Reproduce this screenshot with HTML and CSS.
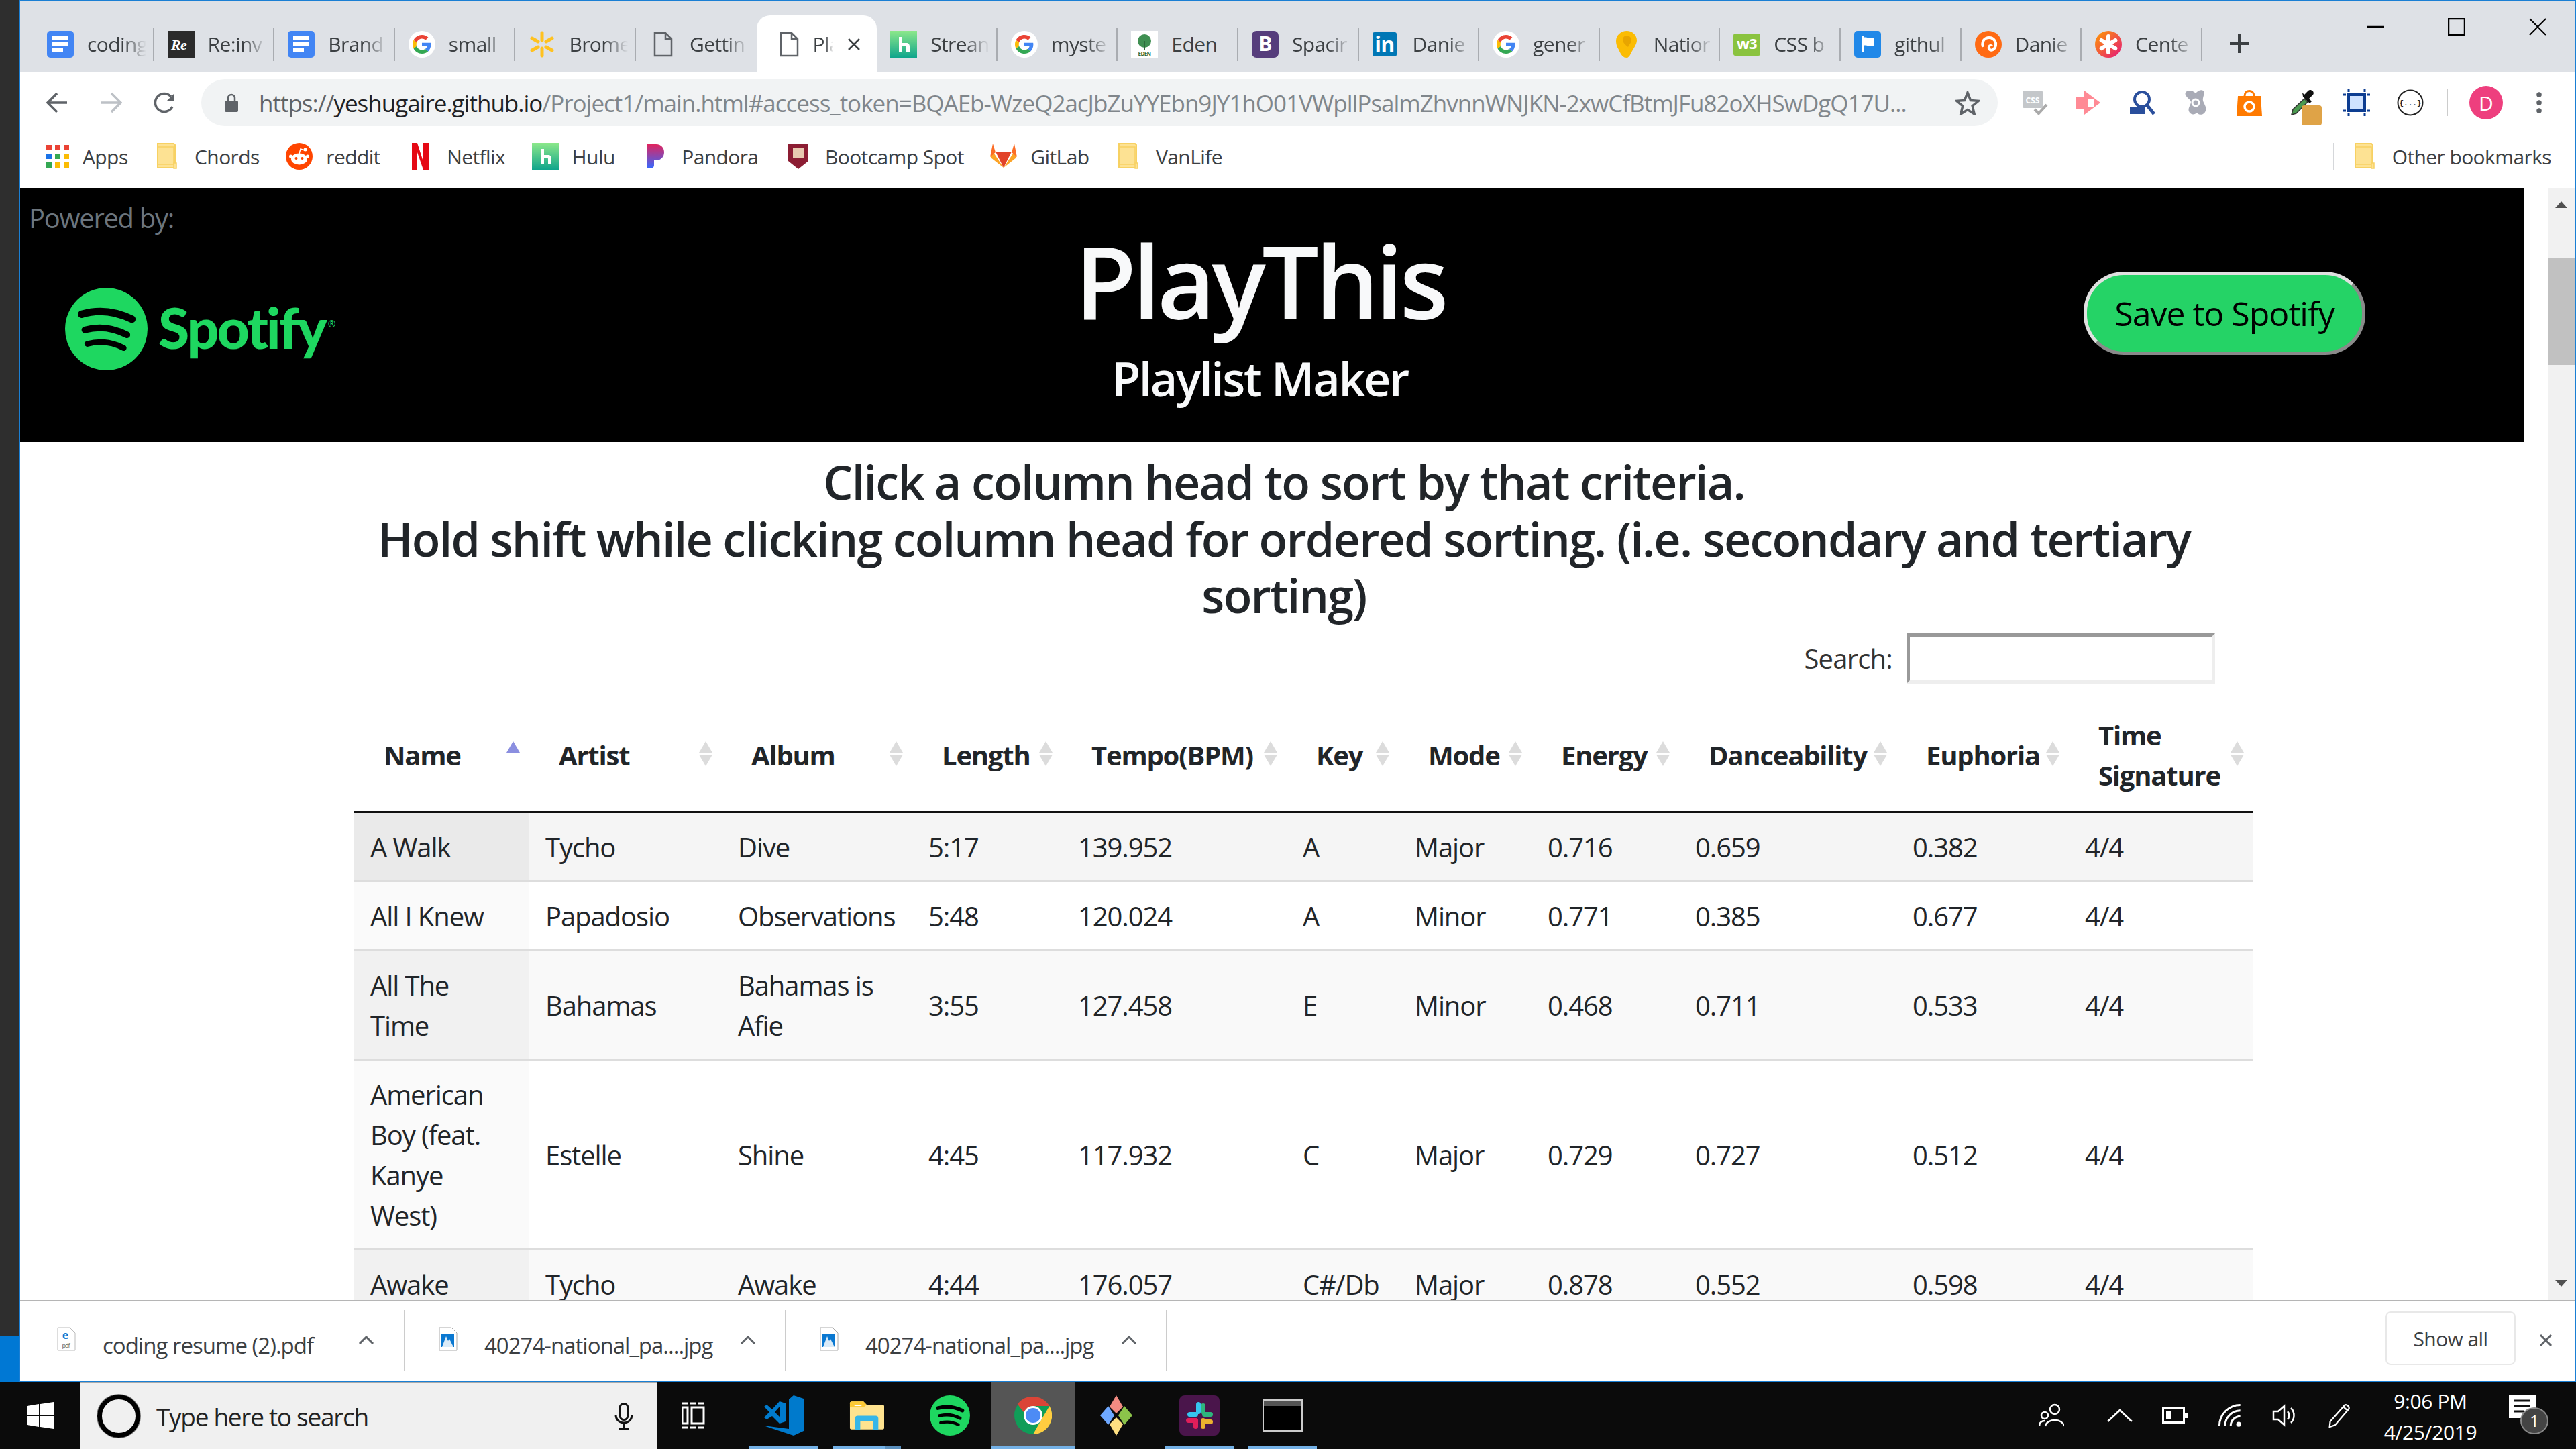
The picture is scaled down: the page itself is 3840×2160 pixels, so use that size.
FILE: index.html
```html
<!DOCTYPE html>
<html lang="en">
<head>
    <meta charset="UTF-8">
    <title>PlayThis</title>
    <link rel="stylesheet" href="styles.css">
</head>
<body>
    <svg class="defs" width="0" height="0">
        <symbol id="i-doc" viewBox="0 0 40 40"><rect width="40" height="40" rx="5" y="0" fill="#4285f4"/><path d="M8 8h24v6H8zM8 17h24v6H8zM8 26h16v6H8z" fill="#fff"/></symbol>
        <symbol id="i-page" viewBox="0 0 40 40"><path d="M8 3h16l9 9v25H8z M24 3v9h9" fill="none" stroke="#5f6368" stroke-width="2.5"/></symbol>
        <symbol id="i-g" viewBox="0 0 40 40"><circle cx="20" cy="20" r="20" fill="#fff"/><g transform="translate(6 6) scale(.583)"><path fill="#EA4335" d="M24 9.5c3.54 0 6.71 1.22 9.21 3.6l6.85-6.85C35.9 2.38 30.47 0 24 0 14.62 0 6.51 5.38 2.56 13.22l7.98 6.19C12.43 13.72 17.74 9.5 24 9.5z"/><path fill="#4285F4" d="M46.98 24.55c0-1.57-.15-3.09-.38-4.55H24v9.02h12.94c-.58 2.96-2.26 5.48-4.78 7.18l7.73 6c4.51-4.18 7.09-10.36 7.09-17.65z"/><path fill="#FBBC05" d="M10.53 28.59c-.48-1.45-.76-2.99-.76-4.59s.27-3.14.76-4.59l-7.98-6.19C.92 16.46 0 20.12 0 24c0 3.88.92 7.54 2.56 10.78l7.97-6.19z"/><path fill="#34A853" d="M24 48c6.48 0 11.93-2.13 15.89-5.81l-7.73-6c-2.15 1.45-4.92 2.3-8.16 2.3-6.26 0-11.57-4.22-13.47-9.91l-7.98 6.19C6.51 42.62 14.62 48 24 48z"/></g></symbol>
        <symbol id="i-folder" viewBox="0 0 40 40"><path d="M5 1h24l2 2v34H5z" fill="#fde293" stroke="#f7d163" stroke-width="2"/><path d="M5 6h24v26H5z" fill="none" stroke="#f7d163" stroke-width="1.5"/><path d="M29 30h4v8h-4z" fill="#fde293" stroke="#f7d163" stroke-width="1.5"/></symbol>
        <symbol id="i-hulu" viewBox="0 0 40 40"><defs><linearGradient id="hulu-bg" x1="0" y1="0" x2="0" y2="1"><stop offset="0" stop-color="#8ce88a"/><stop offset="1" stop-color="#0fa58c"/></linearGradient></defs><rect width="40" height="40" fill="url(#hulu-bg)"/><path d="M13 9h5v9h6c3 0 5 2 5 5v9h-5v-8c0-1-.5-2-2-2h-4v10h-5z" fill="#fff"/></symbol>
        <symbol id="i-spotify" viewBox="0 0 100 100"><circle cx="50" cy="50" r="50" fill="#1ed760"/><g fill="none" stroke="#000" stroke-linecap="round"><path d="M20 32Q50 23 81 38" stroke-width="9"/><path d="M24 51Q50 44 75 57" stroke-width="8"/><path d="M27 68Q50 62 71 73" stroke-width="7"/></g></symbol>
        <symbol id="i-photo" viewBox="0 0 28 36"><path d="M1 1h18l8 8v26H1z" fill="#fff" stroke="#aaa"/><rect x="3" y="10" width="20" height="20" fill="#0a78d1"/><path d="M5 30l6-16 3 7 2-3 6 12z" fill="#fff" opacity=".85"/></symbol>
    </svg>

    <div class="desk">
        <div class="wallpaper"><div class="wallpaper-blue"></div></div>

        <div class="chrome">
            <div class="tabstrip">
                <div class="tab"><svg class="fav"><use href="#i-doc"/></svg><span class="tab-name">coding</span></div>
                <div class="tab"><svg class="fav" viewBox="0 0 40 40"><rect width="40" height="40" fill="#2b2b2b"/><text x="5" y="28" class="fav-re">Re</text></svg><span class="tab-name">Re:inv</span></div>
                <div class="tab"><svg class="fav"><use href="#i-doc"/></svg><span class="tab-name">Brand</span></div>
                <div class="tab"><svg class="fav"><use href="#i-g"/></svg><span class="tab-name">small</span></div>
                <div class="tab"><svg class="fav" viewBox="0 0 40 40"><g stroke="#ffc220" stroke-width="5" stroke-linecap="round"><path d="M20 3v11M20 26v11M5 11l9 5M26 24l9 5M5 29l9-5M26 16l9-5"/></g></svg><span class="tab-name">Brome</span></div>
                <div class="tab tab-before-active"><svg class="fav"><use href="#i-page"/></svg><span class="tab-name">Gettin</span></div>
                <div class="tab tab-active"><svg class="fav"><use href="#i-page"/></svg><span class="tab-name">Pla</span>
                    <svg class="tab-close" viewBox="0 0 20 20"><path d="M2 2l16 16M18 2L2 18" stroke="#3c4043" stroke-width="2.5"/></svg></div>
                <div class="tab"><svg class="fav"><use href="#i-hulu"/></svg><span class="tab-name">Strean</span></div>
                <div class="tab"><svg class="fav"><use href="#i-g"/></svg><span class="tab-name">myste</span></div>
                <div class="tab"><svg class="fav" viewBox="0 0 40 40"><rect width="40" height="40" fill="#fff"/><circle cx="20" cy="15" r="10" fill="#3f8f52"/><path d="M20 15v13" stroke="#2e6b3d" stroke-width="2"/><text x="20" y="37" class="fav-eden">EDEN</text></svg><span class="tab-name tab-name-full">Eden</span></div>
                <div class="tab"><svg class="fav" viewBox="0 0 40 40"><rect width="40" height="40" rx="7" fill="#563d7c"/><text x="20" y="30" class="fav-b">B</text></svg><span class="tab-name">Spacir</span></div>
                <div class="tab"><svg class="fav" viewBox="0 0 40 40"><rect y="2" width="36" height="36" rx="3" fill="#0077b5"/><text x="18" y="32" class="fav-in">in</text></svg><span class="tab-name">Danie</span></div>
                <div class="tab"><svg class="fav"><use href="#i-g"/></svg><span class="tab-name">gener</span></div>
                <div class="tab"><svg class="fav" viewBox="0 0 40 40"><path d="M20 0c8 0 15 6 15 14 0 7-6 13-9 20-2 4-4 6-6 6-5 0-8-3-12-12C5 23 4 19 4 15 4 6 12 0 20 0z" fill="#fbbc04"/><path d="M20 7c4 0 7 3 7 7 0 3-3 6-5 10-3-2-8-7-8-10 0-4 2-7 6-7z" fill="#e8a500"/></svg><span class="tab-name">Natior</span></div>
                <div class="tab"><svg class="fav" viewBox="0 0 40 40"><rect y="4" width="40" height="33" rx="3" fill="#8ac33f"/><text x="20" y="27" class="fav-w3">w3</text></svg><span class="tab-name">CSS b</span></div>
                <div class="tab"><svg class="fav" viewBox="0 0 40 40"><rect width="40" height="40" rx="5" fill="#2188e8"/><path d="M11 8h3v24h-3zM14 10c5-2 9 3 15 0v12c-6 3-10-2-15 0z" fill="#fff"/></svg><span class="tab-name">githul</span></div>
                <div class="tab"><svg class="fav" viewBox="0 0 40 40"><circle cx="20" cy="20" r="20" fill="#ff6a13"/><path d="M12 24a10 10 0 1 1 15 4c-4 2-7-1-6-4 1-3 4-2 4-1" fill="none" stroke="#fff" stroke-width="4"/></svg><span class="tab-name">Danie</span></div>
                <div class="tab"><svg class="fav" viewBox="0 0 40 40"><defs><linearGradient id="center-bg" x1="0" y1="0" x2="1" y2="1"><stop offset="0" stop-color="#ff9c00"/><stop offset="1" stop-color="#e4167c"/></linearGradient></defs><circle cx="20" cy="20" r="20" fill="url(#center-bg)"/><g stroke="#fff" stroke-width="6" stroke-linecap="round"><path d="M20 8v24M9.600 14l20.800 12M9.600 26l20.800-12"/></g></svg><span class="tab-name">Cente</span></div>
                <svg class="new-tab" viewBox="0 0 32 32"><path d="M16 2v28M2 16h28" stroke="#3c4043" stroke-width="4"/></svg>
                <div class="win-controls">
                    <svg class="win-btn" viewBox="0 0 26 26"><path d="M0 13h26" stroke="#000" stroke-width="2.500"/></svg>
                    <svg class="win-btn" viewBox="0 0 26 26"><rect x="1" y="1" width="24" height="24" fill="none" stroke="#000" stroke-width="2.500"/></svg>
                    <svg class="win-btn" viewBox="0 0 26 26"><path d="M1 1l24 24M25 1L1 25" stroke="#000" stroke-width="2"/></svg>
                </div>
            </div>

            <div class="toolbar">
                <svg class="nav nav-back" viewBox="0 0 32 32"><path d="M31 16H3M16 2L2 16l14 14" fill="none" stroke="#5f6368" stroke-width="3.500"/></svg>
                <svg class="nav nav-fwd" viewBox="0 0 32 32"><path d="M1 16h28M16 2l14 14-14 14" fill="none" stroke="#bdc1c6" stroke-width="3.500"/></svg>
                <svg class="nav nav-reload" viewBox="0 0 32 32"><path d="M27 22A13.500 13.500 0 1 1 25 7" fill="none" stroke="#5f6368" stroke-width="3.500"/><path d="M30 2v12H18z" fill="#5f6368"/></svg>
                <div class="omnibox">
                    <svg class="lock" viewBox="0 0 20 28"><path d="M5 12V7a5 5 0 0 1 10 0v5" fill="none" stroke="#5f6368" stroke-width="2.500"/><rect y="11" width="20" height="17" rx="2" fill="#5f6368"/></svg>
                    <div class="url"><span class="url-scheme">https://</span><span class="url-host">yeshugaire.github.io</span>/Project1/main.html#access_token=BQAEb-WzeQ2acJbZuYYEbn9JY1hO01VWpllPsalmZhvnnWNJKN-2xwCfBtmJFu82oXHSwDgQ17U...</div>
                    <svg class="star" viewBox="0 0 36 36"><path d="M18 3l4.500 11.500 12 .8-9.300 7.700 3 12L18 28.500 7.800 35l3-12L1.500 15.300l12-.8z" fill="none" stroke="#5f6368" stroke-width="3.500"/></svg>
                </div>
                <div class="extensions">
                    <svg class="ext" viewBox="0 0 40 40"><rect x="2" y="2" width="30" height="26" rx="2" fill="#c4c7ca"/><text x="17" y="21" class="ext-css">CSS</text><path d="M20 30l6 6 12-13" fill="none" stroke="#aaa" stroke-width="4"/></svg>
                    <svg class="ext" viewBox="0 0 40 40"><path d="M2 11h12V2l24 18-24 18v-9H2z" fill="#ff8a95"/><rect x="20" y="14" width="8" height="12" fill="#fff"/></svg>
                    <svg class="ext" viewBox="0 0 40 40"><circle cx="20" cy="15" r="11" fill="none" stroke="#2a4f9c" stroke-width="4"/><path d="M27 23l11 14" stroke="#2a4f9c" stroke-width="5"/><rect x="2" y="27" width="22" height="10" fill="#2a4f9c"/></svg>
                    <svg class="ext" viewBox="0 0 40 40"><path d="M20 6c4-5 10-6 12-3 2 4-2 9-1 14s6 9 4 15-9 8-13 3c-4 4-10 3-12-2s3-10 3-14S2 10 5 5s11-3 15 1z" fill="#a9abb6"/><circle cx="20" cy="20" r="5" fill="none" stroke="#fff" stroke-width="3"/></svg>
                    <svg class="ext" viewBox="0 0 40 40"><path d="M13 10c0-10 14-10 14 0" fill="none" stroke="#ff7a00" stroke-width="3"/><path d="M3 10h34l2 30H1z" fill="#ff7a00"/><circle cx="20" cy="26" r="7" fill="none" stroke="#fff" stroke-width="3.500"/></svg>
                    <div class="ext-dropper">
                        <svg class="ext" viewBox="0 0 40 40"><path d="M3 38l2-8L22 14l5 5-17 17z" fill="#4a9a4f" stroke="#333" stroke-width="1.500"/><path d="M20 11l10 10 3-3-4-4 6-6c3-4-3-9-7-6l-6 6-3-3z" fill="#111"/></svg>
                        <span class="ext-swatch"></span>
                    </div>
                    <svg class="ext" viewBox="0 0 40 40"><rect x="8" y="8" width="24" height="24" fill="#cfe2ff" stroke="#0d3d91" stroke-width="4"/><path d="M8 0v4M32 0v4M8 36v4M32 36v4M0 8h4M36 8h4M0 32h4M36 32h4" stroke="#0d3d91" stroke-width="3"/></svg>
                    <svg class="ext" viewBox="0 0 40 40"><circle cx="20" cy="20" r="18.500" fill="none" stroke="#222" stroke-width="2"/><text x="20" y="24" class="ext-json">{...}</text></svg>
                </div>
                <span class="toolbar-sep"></span>
                <div class="avatar">D</div>
                <svg class="menu-dots" viewBox="0 0 8 32"><circle cx="4" cy="4" r="3.800" fill="#5f6368"/><circle cx="4" cy="16" r="3.800" fill="#5f6368"/><circle cx="4" cy="28" r="3.800" fill="#5f6368"/></svg>
            </div>

            <div class="bookmarks">
                <div class="bm"><svg class="bm-icon apps" viewBox="0 0 34 34"><g fill="#ea4335"><rect width="8" height="8"/><rect x="13" width="8" height="8"/><rect x="26" width="8" height="8"/></g><rect y="13" width="8" height="8" fill="#1a73e8"/><rect x="13" y="13" width="8" height="8" fill="#34a853"/><rect x="26" y="13" width="8" height="8" fill="#fbbc04"/><rect y="26" width="8" height="8" fill="#34a853"/><rect x="13" y="26" width="8" height="8" fill="#fbbc04"/><rect x="26" y="26" width="8" height="8" fill="#fbbc04"/></svg>Apps</div>
                <div class="bm"><svg class="bm-icon"><use href="#i-folder"/></svg>Chords</div>
                <div class="bm"><svg class="bm-icon" viewBox="0 0 40 40"><circle cx="20" cy="20" r="20" fill="#ff4500"/><ellipse cx="20" cy="24" rx="12" ry="8.500" fill="#fff"/><circle cx="15.500" cy="23" r="2" fill="#ff4500"/><circle cx="24.500" cy="23" r="2" fill="#ff4500"/><circle cx="7.500" cy="20" r="2.500" fill="#fff"/><circle cx="32.500" cy="20" r="2.500" fill="#fff"/><path d="M20 16l2-7 6 2" fill="none" stroke="#fff" stroke-width="1.500"/><circle cx="29" cy="10" r="2.500" fill="#fff"/></svg>reddit</div>
                <div class="bm"><svg class="bm-icon" viewBox="0 0 40 40"><path d="M8 0h8l9 28V0h8v40h-8L16 14v26H8z" fill="#e50914"/></svg>Netflix</div>
                <div class="bm"><svg class="bm-icon"><use href="#i-hulu"/></svg>Hulu</div>
                <div class="bm"><svg class="bm-icon" viewBox="0 0 40 40"><defs><linearGradient id="pandora-bg" x1="0" y1="0" x2="0" y2="1"><stop offset="0" stop-color="#e0245e"/><stop offset="1" stop-color="#3668ff"/></linearGradient></defs><path d="M8 2h14c16 0 16 24 0 24h-3v7c0 3-2 5-5 5H8z" fill="url(#pandora-bg)"/></svg>Pandora</div>
                <div class="bm"><svg class="bm-icon" viewBox="0 0 40 40"><path d="M5 1h30v26L20 39 5 27z" fill="#8c1d33"/><path d="M12 8h16v14H12z" fill="#e8c9b0"/></svg>Bootcamp Spot</div>
                <div class="bm"><svg class="bm-icon" viewBox="0 0 40 40"><path d="M20 37L1 22l3-9z" fill="#fca326"/><path d="M20 37l19-15-3-9z" fill="#fca326"/><path d="M20 37L8 13h24z" fill="#e24329"/><path d="M8 14L4 1l-4 20z" fill="#fc6d26"/><path d="M32 14L36 1l4 20z" fill="#fc6d26"/></svg>GitLab</div>
                <div class="bm"><svg class="bm-icon"><use href="#i-folder"/></svg>VanLife</div>
                <div class="bm-other"><svg class="bm-icon"><use href="#i-folder"/></svg>Other bookmarks</div>
            </div>

            <div class="page-frame">
                <div class="page">
                    <header class="banner">
                        <div class="banner-left">
                            <p class="powered">Powered by:</p>
                            <div class="spotify-logo">
                                <svg class="spotify-mark"><use href="#i-spotify"/></svg>
                                <span class="spotify-word">Spotify</span><span class="spotify-reg">®</span>
                            </div>
                        </div>
                        <div class="banner-title">
                            <h1>PlayThis</h1>
                            <h3>Playlist Maker</h3>
                        </div>
                        <div class="banner-right">
                            <button class="save-btn" type="button">Save to Spotify</button>
                        </div>
                    </header>

                    <h3 class="hint">Click a column head to sort by that criteria.<br>Hold shift while clicking column head for ordered sorting. (i.e. secondary and tertiary<br>sorting)</h3>

                    <div class="search-row">
                        <label for="tableSearch">Search:</label>
                        <input id="tableSearch" type="text">
                    </div>

                    <table class="songs">
                        <thead>
                            <tr>
                                <th class="sort-asc">Name</th>
                                <th>Artist</th>
                                <th>Album</th>
                                <th>Length</th>
                                <th>Tempo(BPM)</th>
                                <th>Key</th>
                                <th>Mode</th>
                                <th>Energy</th>
                                <th>Danceability</th>
                                <th>Euphoria</th>
                                <th>Time Signature</th>
                            </tr>
                        </thead>
                        <tbody>
                            <tr class="row-hover">
                                <td>A Walk</td><td>Tycho</td><td>Dive</td><td>5:17</td><td>139.952</td><td>A</td><td>Major</td><td>0.716</td><td>0.659</td><td>0.382</td><td>4/4</td>
                            </tr>
                            <tr>
                                <td>All I Knew</td><td>Papadosio</td><td>Observations</td><td>5:48</td><td>120.024</td><td>A</td><td>Minor</td><td>0.771</td><td>0.385</td><td>0.677</td><td>4/4</td>
                            </tr>
                            <tr>
                                <td>All The Time</td><td>Bahamas</td><td>Bahamas is Afie</td><td>3:55</td><td>127.458</td><td>E</td><td>Minor</td><td>0.468</td><td>0.711</td><td>0.533</td><td>4/4</td>
                            </tr>
                            <tr>
                                <td>American Boy (feat. Kanye West)</td><td>Estelle</td><td>Shine</td><td>4:45</td><td>117.932</td><td>C</td><td>Major</td><td>0.729</td><td>0.727</td><td>0.512</td><td>4/4</td>
                            </tr>
                            <tr>
                                <td>Awake</td><td>Tycho</td><td>Awake</td><td>4:44</td><td>176.057</td><td>C#/Db</td><td>Major</td><td>0.878</td><td>0.552</td><td>0.598</td><td>4/4</td>
                            </tr>
                        </tbody>
                    </table>
                </div>
                <div class="scrollbar">
                    <svg class="scroll-arrow" viewBox="0 0 20 12"><path d="M10 1l9 10H1z" fill="#505050"/></svg>
                    <div class="scroll-track"><div class="scroll-thumb"></div></div>
                    <svg class="scroll-arrow" viewBox="0 0 20 12"><path d="M10 11L1 1h18z" fill="#505050"/></svg>
                </div>
            </div>

            <div class="downloads">
                <div class="dl-item">
                    <svg class="dl-icon" viewBox="0 0 28 36"><path d="M1 1h18l8 8v26H1z" fill="#fff" stroke="#bbb"/><text x="12" y="18" class="dl-e">e</text><text x="13" y="31" class="dl-pdf">pdf</text></svg>
                    <span class="dl-name">coding resume (2).pdf</span>
                    <svg class="dl-chev" viewBox="0 0 24 14"><path d="M2 12L12 2l10 10" fill="none" stroke="#5f6368" stroke-width="3"/></svg>
                </div>
                <div class="dl-item">
                    <svg class="dl-icon"><use href="#i-photo"/></svg>
                    <span class="dl-name">40274-national_pa....jpg</span>
                    <svg class="dl-chev" viewBox="0 0 24 14"><path d="M2 12L12 2l10 10" fill="none" stroke="#5f6368" stroke-width="3"/></svg>
                </div>
                <div class="dl-item">
                    <svg class="dl-icon"><use href="#i-photo"/></svg>
                    <span class="dl-name">40274-national_pa....jpg</span>
                    <svg class="dl-chev" viewBox="0 0 24 14"><path d="M2 12L12 2l10 10" fill="none" stroke="#5f6368" stroke-width="3"/></svg>
                </div>
                <button class="show-all" type="button">Show all</button>
                <svg class="dl-close" viewBox="0 0 20 20"><path d="M2 2l16 16M18 2L2 18" stroke="#5f6368" stroke-width="3"/></svg>
            </div>
        </div>
    </div>

    <div class="taskbar">
        <svg class="win-logo" viewBox="0 0 40 40"><path d="M0 6l18-3v16H0zM20 3l20-3v19H20zM0 21h18v16L0 34zM20 21h20v19l-20-3z" fill="#fff"/></svg>
        <div class="task-search">
            <span class="cortana"></span>
            <span class="task-search-text">Type here to search</span>
            <svg class="mic" viewBox="0 0 28 40"><rect x="8" y="1.500" width="12" height="24" rx="6" fill="none" stroke="#111" stroke-width="3"/><path d="M2 18c0 16 24 16 24 0M14 32v7M7 39h14" fill="none" stroke="#111" stroke-width="3"/></svg>
        </div>
        <svg class="task-view" viewBox="0 0 42 40"><path d="M1 2h8M1 38h8M13 2h8M13 38h8M25 2h8M25 38h8M15 8h18v24H15zM1 8h8v24H1z" fill="none" stroke="#fff" stroke-width="3"/></svg>

        <div class="task-app running"><svg class="app-icon" viewBox="0 0 60 60"><path d="M45 0L60 5V53L45 60L0 45L38 50V6z" fill="#007acc"/><path fill-rule="evenodd" d="M24 9L33 12V39L24 42L13 31L5 36L1 33L9 25L1 17L5 14L13 21zM24 17L17 25L24 32z" fill="#007acc"/></svg></div>
        <div class="task-app running running-multi"><svg class="app-icon folder" viewBox="0 0 54 44"><path d="M1 3c0-2 1-3 3-3h18l5 5h25c1 0 2 1 2 2v34c0 1-1 2-2 2H3c-1 0-2-1-2-2z" fill="#ffe38f"/><path d="M1 3c0-2 1-3 3-3h18l5 5-5 4H1z" fill="#fcc935"/><path d="M8 5h11v2H8z" fill="#fff"/><path d="M9 44V26c0-3 2-4 4-4h28c2 0 4 1 4 4v18h-8V30H17v14z" fill="#36b6e8"/></svg></div>
        <div class="task-app"><svg class="app-icon"><use href="#i-spotify"/></svg></div>
        <div class="task-app active running"><svg class="app-icon chrome-icon" viewBox="0 0 48 48"><circle cx="24" cy="24" r="24" fill="#0f9d58"/><path d="M45 12A24 24 0 0 1 24 48l12-21z" fill="#ffcd40"/><path d="M24 0a24 24 0 0 1 21 12H24a12 12 0 0 0-11.500 8.500L4 9.500A24 24 0 0 1 24 0z" fill="#db4437"/><circle cx="24" cy="24" r="12" fill="#fff"/><circle cx="24" cy="24" r="9.500" fill="#4c8bf5"/></svg></div>
        <div class="task-app"><svg class="app-icon" viewBox="0 0 60 60"><path d="M30 0L40 17L30 27L20 17z" fill="#f28b82"/><path d="M54 30L42 44L33 30L42 16z" fill="#8bc34a"/><path d="M30 60L20 43L30 33L40 43z" fill="#ffe082"/><path d="M6 30L18 16L27 30L18 44z" fill="#6ea8ff"/></svg></div>
        <div class="task-app running"><svg class="app-icon" viewBox="0 0 60 60"><rect width="60" height="60" rx="8" fill="#4a154b"/><rect x="25" y="10" width="7" height="18" rx="3.500" fill="#36c5f0"/><rect x="12" y="25" width="16" height="7" rx="3.500" fill="#36c5f0"/><rect x="32" y="12" width="7" height="16" rx="3.500" fill="#2eb67d"/><rect x="34" y="25" width="16" height="7" rx="3.500" fill="#2eb67d"/><rect x="10" y="34" width="18" height="7" rx="3.500" fill="#e01e5a"/><rect x="21" y="34" width="7" height="16" rx="3.500" fill="#e01e5a"/><rect x="32" y="34" width="7" height="16" rx="3.500" fill="#ecb22e"/><rect x="32" y="36" width="18" height="7" rx="3.500" fill="#ecb22e"/></svg></div>
        <div class="task-app running"><svg class="app-icon term" viewBox="0 0 60 48"><rect x="1" y="1" width="58" height="46" fill="#000" stroke="#ccc" stroke-width="2"/><rect x="2" y="2" width="56" height="8" fill="#555"/></svg></div>

        <div class="tray">
            <svg class="tray-icon tray-people" viewBox="0 0 38 36"><circle cx="24" cy="9" r="7" fill="none" stroke="#fff" stroke-width="2.500"/><path d="M10 34c2-12 26-12 28 0" fill="none" stroke="#fff" stroke-width="2.500"/><circle cx="9" cy="18" r="5" fill="none" stroke="#fff" stroke-width="2.500"/><path d="M1 34c0-6 4-8 8-8" fill="none" stroke="#fff" stroke-width="2.500"/></svg>
            <svg class="tray-icon" viewBox="0 0 34 18"><path d="M1 17L17 2l16 15" fill="none" stroke="#fff" stroke-width="2.500"/></svg>
            <svg class="tray-icon" viewBox="0 0 38 24"><rect x="1.500" y="1.500" width="31" height="21" fill="none" stroke="#fff" stroke-width="3"/><rect x="6" y="6" width="8" height="12" fill="#fff"/><rect x="34" y="8" width="4" height="8" fill="#fff"/></svg>
            <svg class="tray-icon" viewBox="0 0 30 30"><path d="M2 28A26 26 0 0 1 28 2M9 28A19 19 0 0 1 28 9M16 28A12 12 0 0 1 28 16" fill="none" stroke="#fff" stroke-width="2.500"/><circle cx="26" cy="26" r="3" fill="#fff"/></svg>
            <svg class="tray-icon" viewBox="0 0 38 34"><path d="M2 11h7l9-8v28l-9-8H2z" fill="none" stroke="#fff" stroke-width="2.500"/><path d="M23 11c3 3 3 9 0 12M28 6c6 6 6 16 0 22" fill="none" stroke="#fff" stroke-width="2.500"/></svg>
            <svg class="tray-icon" viewBox="0 0 40 40"><path d="M28 3c3-2 8 2 7 6L12 36l-9 3 1-9z" fill="none" stroke="#fff" stroke-width="2.500"/><path d="M26 6l7 6" stroke="#fff" stroke-width="2.500"/></svg>
        </div>
        <div class="clock"><span>9:06 PM</span><span>4/25/2019</span></div>
        <div class="notify">
            <svg class="notify-icon" viewBox="0 0 40 34"><path d="M0 0h40v34H0z" fill="#fff"/><path d="M8 8h24M8 16h24M8 24h14" stroke="#111" stroke-width="3"/></svg>
            <span class="notify-badge">1</span>
        </div>
    </div>
</body>
</html>
```
FILE: styles.css
```css
/* Whole screen */
html, body {
    margin: 0;
    padding: 0;
}

body {
    width: 3840px;
    height: 2160px;
    overflow: hidden;
    display: flex;
    flex-direction: column;
    font-family: "Open Sans", "Noto Sans", sans-serif;
    color: #212529;
    background: #0b0b0b;
}

.defs {
    position: absolute;
}

.desk {
    display: flex;
    height: 2060px;
}

.wallpaper {
    width: 29px;
    background: #2e2e2e;
    display: flex;
    flex-direction: column;
    justify-content: flex-end;
}

.wallpaper-blue {
    height: 68px;
    background: #0078d4;
}

.chrome {
    width: 3811px;
    display: flex;
    flex-direction: column;
    box-sizing: border-box;
    background: #fff;
    border: solid #1a7fd4;
    border-width: 2px 2px 2px 1px;
}

/* Tabs */
.tabstrip {
    height: 106px;
    flex: none;
    display: flex;
    align-items: flex-end;
    padding-left: 20px;
    background: #dee1e6;
    box-sizing: border-box;
    position: relative;
}

.tab {
    width: 179.6px;
    height: 85px;
    flex: none;
    box-sizing: border-box;
    display: flex;
    align-items: center;
    padding-left: 20px;
    position: relative;
    font-size: 30px;
    letter-spacing: -0.6px;
    color: #3c4043;
}

.tab::after {
    content: "";
    position: absolute;
    right: 0;
    top: 18px;
    height: 50px;
    width: 2px;
    background: #a9acb1;
}

.tab-before-active::after,
.tab-active::after {
    display: none;
}

.tab-active {
    background: #fff;
    border-radius: 20px 20px 0 0;
    padding-left: 28px;
}

.fav {
    width: 40px;
    height: 40px;
    flex: none;
}

.fav-re {
    font: italic 700 22px "Liberation Serif", serif;
    fill: #fff;
}

.fav-eden {
    font: 700 8px "Open Sans", sans-serif;
    fill: #2e6b3d;
    text-anchor: middle;
}

.fav-b {
    font: 700 30px "Open Sans", sans-serif;
    fill: #fff;
    text-anchor: middle;
}

.fav-in {
    font: 700 32px "Open Sans", sans-serif;
    fill: #fff;
    text-anchor: middle;
}

.fav-w3 {
    font: 700 22px "Open Sans", sans-serif;
    fill: #fff;
    text-anchor: middle;
}

.tab-name {
    margin-left: 20px;
    width: 88px;
    overflow: hidden;
    white-space: nowrap;
    -webkit-mask-image: linear-gradient(to right, #000 60%, transparent 100%);
    mask-image: linear-gradient(to right, #000 60%, transparent 100%);
}

.tab-name-full {
    -webkit-mask-image: none;
    mask-image: none;
}

.tab-active .tab-name {
    margin-left: 16px;
    width: 30px;
}

.tab-close {
    width: 20px;
    height: 20px;
    margin-left: 21px;
}

.new-tab {
    width: 32px;
    height: 32px;
    margin: 0 0 27px 39px;
}

.win-controls {
    position: absolute;
    top: 25px;
    right: 42px;
    display: flex;
    gap: 95px;
}

.win-btn {
    width: 26px;
    height: 26px;
}

/* Toolbar with address box */
.toolbar {
    height: 90px;
    flex: none;
    display: flex;
    align-items: center;
    padding-left: 39px;
}

.nav {
    width: 32px;
    height: 32px;
    flex: none;
}

.nav-fwd {
    margin-left: 49px;
}

.nav-reload {
    margin-left: 48px;
}

.omnibox {
    width: 2678px;
    height: 70px;
    flex: none;
    margin-left: 38px;
    display: flex;
    align-items: center;
    background: #f1f3f4;
    border-radius: 35px;
    box-sizing: border-box;
    padding: 0 10px 0 35px;
    font-size: 35px;
    letter-spacing: -1px;
    color: #80868b;
}

.lock {
    width: 20px;
    height: 28px;
    flex: none;
}

.url {
    flex: 1;
    margin-left: 31px;
    white-space: nowrap;
    overflow: hidden;
}

.url-scheme {
    color: #5f6368;
}

.url-host {
    color: #202124;
}

.star {
    width: 36px;
    height: 36px;
    flex: none;
    margin: 0 17px 0 10px;
}

.extensions {
    display: flex;
    gap: 40px;
    margin-left: 35px;
}

.ext {
    width: 40px;
    height: 40px;
    display: block;
}

.ext-css {
    font: 700 12px "Open Sans", sans-serif;
    fill: #fff;
    text-anchor: middle;
}

.ext-json {
    font: 700 11px "Liberation Mono", monospace;
    fill: #222;
    text-anchor: middle;
}

.ext-dropper {
    position: relative;
    width: 40px;
}

.ext-swatch {
    position: absolute;
    left: 18px;
    top: 24px;
    width: 30px;
    height: 30px;
    border-radius: 4px;
    background: #dfa347;
}

.toolbar-sep {
    width: 2px;
    height: 40px;
    margin-left: 34px;
    background: #ccc;
}

.avatar {
    width: 50px;
    height: 50px;
    margin-left: 32px;
    border-radius: 50%;
    background: #ee3f7e;
    color: #fff;
    font-size: 30px;
    display: flex;
    align-items: center;
    justify-content: center;
}

.menu-dots {
    width: 8px;
    height: 32px;
    margin-left: 50px;
}

/* Bookmarks bar */
.bookmarks {
    height: 82px;
    flex: none;
    box-sizing: border-box;
    padding: 0 0 12px 39px;
    display: flex;
    align-items: center;
    gap: 39.5px;
    font-size: 30px;
    letter-spacing: -0.6px;
    color: #3c4043;
}

.bm,
.bm-other {
    display: flex;
    align-items: center;
    gap: 20px;
    white-space: nowrap;
}

.bm-icon {
    width: 40px;
    height: 40px;
    flex: none;
}

.bm-icon.apps {
    width: 34px;
    height: 34px;
}

.bm-other {
    margin-left: auto;
    height: 40px;
    padding: 0 35px 0 26px;
    border-left: 2px solid #d5d7da;
}

/* Page area */
.page-frame {
    height: 1658px;
    flex: none;
    display: flex;
    overflow: hidden;
}

.page {
    flex: 1;
    min-width: 0;
    overflow: hidden;
}

.banner {
    width: 3732px;
    height: 379px;
    background: #000;
    display: grid;
    grid-template-columns: 1448px 800px 1fr;
}

.powered {
    margin: 0;
    padding: 15px 0 0 13px;
    font-size: 40px;
    line-height: 60px;
    letter-spacing: -1.3px;
    color: #6c757d;
}

.spotify-logo {
    display: flex;
    align-items: center;
    margin: 74px 0 0 67px;
    color: #1ed760;
}

.spotify-mark {
    width: 123px;
    height: 123px;
    flex: none;
}

.spotify-word {
    margin: -6px 0 0 16px;
    font-family: Lato, sans-serif;
    font-size: 84px;
    font-weight: 900;
    letter-spacing: -3px;
    line-height: 100px;
}

.spotify-reg {
    align-self: flex-start;
    margin: 44px 0 0 4px;
    font-size: 14px;
}

.banner-title {
    text-align: center;
    color: #f8f9fa;
}

.banner-title h1 {
    margin: 48px 0 0;
    font-size: 150px;
    font-weight: 600;
    letter-spacing: -5.5px;
    line-height: 180px;
}

.banner-title h3 {
    margin: 14px 0 0;
    font-size: 70px;
    font-weight: 600;
    letter-spacing: -2.4px;
    line-height: 84px;
}

.banner-right {
    display: flex;
    justify-content: flex-end;
    padding: 125px 236px 0 0;
    align-items: flex-start;
}

.save-btn {
    width: 420px;
    height: 124px;
    box-sizing: border-box;
    border: 5px solid;
    border-color: #e0e0e0 #8a8a8a #8a8a8a #e0e0e0;
    border-radius: 60px;
    background: #25d366;
    color: #000;
    font-family: inherit;
    font-size: 50px;
    letter-spacing: -1px;
}

.hint {
    margin: 17px 0 0;
    text-align: center;
    font-size: 70px;
    font-weight: 600;
    letter-spacing: -1.8px;
    line-height: 84.5px;
}

.search-row {
    display: flex;
    justify-content: flex-end;
    align-items: center;
    gap: 21px;
    margin: 14px 496px 0 0;
    font-size: 40px;
    letter-spacing: -0.8px;
    color: #333;
}

.search-row input {
    width: 460px;
    height: 75px;
    box-sizing: border-box;
    border: 5px solid;
    border-color: #999 #eee #eee #999;
    padding: 0;
}

.songs {
    width: 2831px;
    margin: 20px 0 0 497px;
    table-layout: fixed;
    border-collapse: separate;
    border-spacing: 0;
    font-size: 40px;
    line-height: 60px;
    letter-spacing: -1.1px;
}

.songs th {
    position: relative;
    box-sizing: border-box;
    padding: 27px 45px 23px;
    text-align: left;
    font-weight: 700;
    letter-spacing: -1.2px;
    border-bottom: 3px solid #111;
}

.songs th::before,
.songs th::after {
    content: "";
    position: absolute;
    right: 13px;
    border-left: 10px solid transparent;
    border-right: 10px solid transparent;
}

.songs th::before {
    top: 66px;
    border-bottom: 17px solid #dcdcdc;
}

.songs th::after {
    top: 86px;
    border-top: 17px solid #dcdcdc;
}

.songs th.sort-asc::before {
    border-bottom-color: #8b8fe0;
}

.songs th.sort-asc::after {
    display: none;
}

.songs th:nth-child(1) { width: 261px; }
.songs th:nth-child(2) { width: 287px; }
.songs th:nth-child(3) { width: 284px; }
.songs th:nth-child(4) { width: 223px; }
.songs th:nth-child(5) { width: 335px; }
.songs th:nth-child(6) { width: 167px; }
.songs th:nth-child(7) { width: 198px; }
.songs th:nth-child(8) { width: 220px; }
.songs th:nth-child(9) { width: 324px; }
.songs th:nth-child(10) { width: 257px; }
.songs th:nth-child(11) { width: 275px; }

.songs td {
    padding: 21px 25px 19px;
    border-bottom: 3px solid #ddd;
}

.songs tbody tr:nth-child(odd) td {
    background: #f9f9f9;
}

.songs tbody tr:nth-child(odd) td:first-child {
    background: #f1f1f1;
}

.songs tbody tr:nth-child(even) td:first-child {
    background: #fafafa;
}

.songs tbody tr.row-hover td {
    background: #f5f5f5;
}

.songs tbody tr.row-hover td:first-child {
    background: #eaeaea;
}

.scrollbar {
    width: 40px;
    flex: none;
    display: flex;
    flex-direction: column;
    align-items: center;
    background: #f1f1f1;
}

.scroll-arrow {
    width: 20px;
    height: 12px;
    margin: 19px 0;
    flex: none;
}

.scroll-track {
    flex: 1;
    width: 100%;
}

.scroll-thumb {
    height: 160px;
    margin-top: 54px;
    background: #c1c1c1;
}

/* Download shelf */
.downloads {
    height: 118px;
    flex: none;
    display: flex;
    align-items: center;
    box-sizing: border-box;
    border-top: 2px solid #b5b5b5;
    font-size: 33px;
    letter-spacing: -1px;
    color: #3c4043;
}

.dl-item {
    width: 568px;
    height: 90px;
    flex: none;
    box-sizing: border-box;
    display: flex;
    align-items: flex-start;
    border-right: 2px solid #ccc;
    padding-left: 50px;
}

.dl-item:first-child {
    width: 574px;
    padding-left: 55px;
}

.dl-icon {
    width: 28px;
    height: 36px;
    flex: none;
    margin-top: 25px;
}

.dl-e {
    font: 700 16px "Open Sans", sans-serif;
    fill: #0a78d1;
    text-anchor: middle;
}

.dl-pdf {
    font: 9px "Open Sans", sans-serif;
    fill: #666;
    text-anchor: middle;
}

.dl-name {
    margin: 28px 0 0 40px;
    width: 345px;
    line-height: 50px;
    white-space: nowrap;
    flex: none;
}

.dl-chev {
    width: 24px;
    height: 14px;
    margin: 38px 0 0 36px;
}

.show-all {
    width: 194px;
    height: 80px;
    margin: -6px 0 0 auto;
    background: #fff;
    border: 2px solid #e8e8e8;
    border-radius: 8px;
    font-family: inherit;
    font-size: 30px;
    letter-spacing: -0.6px;
    color: #3c4043;
}

.dl-close {
    width: 20px;
    height: 20px;
    margin: 0 33px 0 35px;
}

/* Windows taskbar */
.taskbar {
    height: 100px;
    flex: none;
    display: flex;
    align-items: center;
    background: #0b0b0b;
    color: #fff;
    position: relative;
}

.win-logo {
    width: 40px;
    height: 40px;
    margin: 0 40px;
    flex: none;
}

.task-search {
    width: 860px;
    height: 100px;
    flex: none;
    box-sizing: border-box;
    display: flex;
    align-items: center;
    padding: 0 36px 0 25px;
    background: #f0f0f0;
    border-top: 2px solid #aaa;
    color: #222;
    font-size: 37px;
    letter-spacing: -1.3px;
}

.cortana {
    width: 64px;
    height: 64px;
    flex: none;
    box-sizing: border-box;
    border-radius: 50%;
    border: 7px solid #000;
    box-shadow: 0 0 0 1px #777;
}

.task-search-text {
    flex: 1;
    margin-left: 24px;
    white-space: nowrap;
}

.mic {
    width: 28px;
    height: 40px;
    flex: none;
}

.task-view {
    width: 42px;
    height: 40px;
    flex: none;
    margin: 0 48px 0 36px;
}

.task-app {
    width: 124px;
    height: 100px;
    flex: none;
    display: flex;
    align-items: center;
    justify-content: center;
    position: relative;
}

.task-app.running::after {
    content: "";
    position: absolute;
    left: 11px;
    right: 11px;
    bottom: 0;
    height: 5px;
    background: #74b1e6;
}

.task-app.running-multi::after {
    background: linear-gradient(to right, #74b1e6 77%, #5a8fbd 77%);
}

.task-app.active {
    background: #555;
}

.task-app.active::after {
    left: 0;
    right: 0;
}

.app-icon {
    width: 60px;
    height: 60px;
}

.app-icon.folder {
    width: 52px;
    height: 43px;
}

.app-icon.chrome-icon {
    width: 56px;
    height: 56px;
}

.term {
    height: 48px;
}

.tray {
    margin-left: auto;
    display: flex;
    align-items: center;
    gap: 44px;
}

.tray-icon {
    height: 36px;
    width: 38px;
}

.tray-people {
    margin-right: 20px;
}

.clock {
    width: 140px;
    margin-left: 46px;
    padding-top: 4px;
    display: flex;
    flex-direction: column;
    align-items: center;
    font-size: 30px;
    line-height: 46px;
    letter-spacing: -0.4px;
}

.notify {
    position: relative;
    width: 60px;
    height: 60px;
    margin: 0 40px 0 47px;
}

.notify-icon {
    width: 40px;
    height: 34px;
}

.notify-badge {
    position: absolute;
    left: 17px;
    top: 18px;
    width: 42px;
    height: 40px;
    border-radius: 50%;
    background: #444;
    border: 2px solid #888;
    box-sizing: border-box;
    font-size: 24px;
    text-align: center;
    line-height: 36px;
}
```
